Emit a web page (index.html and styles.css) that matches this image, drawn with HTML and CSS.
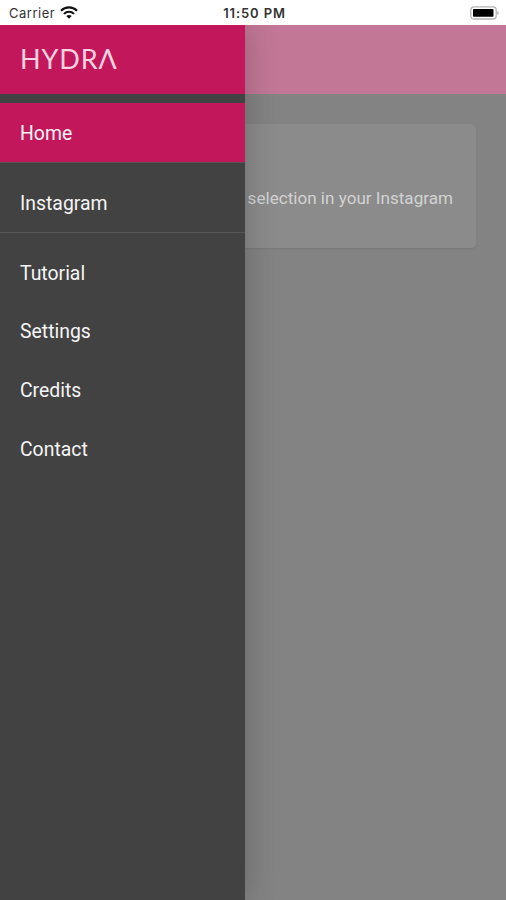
FILE: index.html
```html
<!DOCTYPE html>
<html lang="en">
<head>
  <meta charset="UTF-8" />
  <meta name="viewport" content="width=device-width, initial-scale=1.0"/>
  <title>Hydra</title>
  <link rel="stylesheet" href="styles.css">
</head>
<body>

  <div class="status-bar">
    <div class="carrier">
      <span>Carrier</span>
      <svg class="wifi" viewBox="0 0 18 13" width="18" height="13">
        <path d="M1 4.8 C5.5 0.2 12.5 0.2 17 4.8" fill="none" stroke="#111" stroke-width="2.1"/>
        <path d="M3.9 7.9 C6.8 5 11.2 5 14.1 7.9" fill="none" stroke="#111" stroke-width="2"/>
        <path d="M6.3 10.1 Q9 7.8 11.7 10.1 L9 12.8 Z" fill="#111"/>
      </svg>
    </div>
    <div class="time">11:50 PM</div>
    <svg class="battery" viewBox="0 0 30 14" width="30" height="14">
      <rect x="0.8" y="0.8" width="25.4" height="12.2" rx="3" fill="#fff" stroke="#b4b4b4" stroke-width="1.3"/>
      <rect x="3" y="3" width="20.5" height="7.8" rx="0.8" fill="#000"/>
      <path d="M27.4 4.8 Q30 6.9 27.4 9 Z" fill="#aaa"/>
    </svg>
  </div>

  <div class="app">
    <main class="page">
      <div class="toolbar"></div>
      <div class="card">
        <p>selection in your Instagram</p>
      </div>
    </main>

    <aside class="drawer">
      <div class="brand">HYDRΛ</div>
      <nav>
        <ul class="menu">
          <li class="active">Home</li>
        </ul>
        <ul class="menu">
          <li>Instagram</li>
        </ul>
        <ul class="menu">
          <li>Tutorial</li>
          <li>Settings</li>
          <li>Credits</li>
          <li>Contact</li>
        </ul>
      </nav>
    </aside>
  </div>

</body>
</html>
```
FILE: styles.css
```css
* {
  box-sizing: border-box;
}

body {
  margin: 0;
  height: 100vh;
  display: flex;
  flex-direction: column;
  font-family: Roboto, sans-serif;
  background: #838383;
  overflow: hidden;
}

.status-bar {
  height: 25px;
  flex: none;
  display: grid;
  grid-template-columns: 1fr auto 1fr;
  align-items: center;
  padding: 0 6px 0 9px;
  background: white;
  font-family: Inter, sans-serif;
  font-size: 13px;
  color: #333;
}

.carrier {
  display: flex;
  align-items: center;
  gap: 5px;
  letter-spacing: 0.5px;
}

.time {
  font-weight: 600;
  letter-spacing: 0.9px;
}

.battery {
  justify-self: end;
}

.app {
  position: relative;
  flex: 1;
  overflow: hidden;
}

.toolbar {
  height: 69px;
  background: #c17795;
}

.card {
  height: 124px;
  margin: 30px 30px 0;
  padding: 0 23px;
  display: flex;
  align-items: center;
  justify-content: flex-end;
  background: #8b8b8b;
  border-radius: 5px;
  box-shadow: 0 1px 2px rgba(0,0,0,0.08);
}

.card p {
  margin: 23px 0 0;
  font-size: 17.1px;
  color: #d2d2d2;
}

.drawer {
  position: absolute;
  top: 0;
  left: 0;
  bottom: 0;
  width: 245px;
  background: #424242;
  color: #f5f5f5;
  box-shadow: 0 0 30px rgba(0,0,0,0.22);
}

.brand {
  height: 69px;
  padding: 0 20px;
  line-height: 67px;
  background: #c2185b;
  color: #fbd3e1;
  font-family: Lato, sans-serif;
  font-size: 27px;
  letter-spacing: 0.9px;
}

.menu {
  list-style: none;
  margin: 0;
  padding: 10px 0 0;
}

.menu:first-child {
  padding-top: 9px;
}

.menu:not(:last-child) {
  border-bottom: 1px solid #565656;
}

.menu li {
  height: 58.8px;
  padding-left: 20px;
  line-height: 61px;
  font-size: 19.4px;
}

.menu .active {
  background: #c2185b;
}
```
